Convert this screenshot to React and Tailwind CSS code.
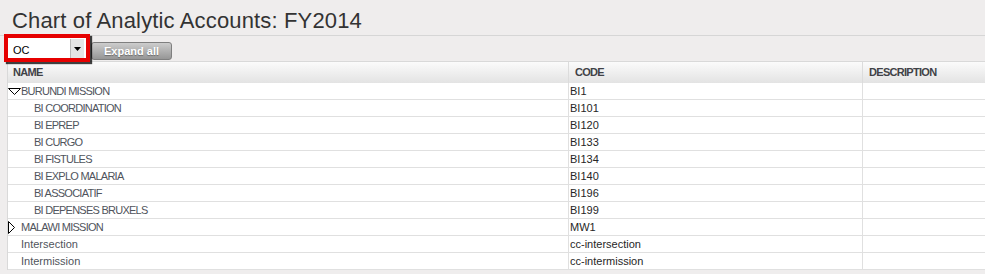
const ROWS = [
  { name: "BURUNDI MISSION", code: "BI1", kind: "open" },
  { name: "BI COORDINATION", code: "BI101", kind: "child" },
  { name: "BI EPREP", code: "BI120", kind: "child" },
  { name: "BI CURGO", code: "BI133", kind: "child" },
  { name: "BI FISTULES", code: "BI134", kind: "child" },
  { name: "BI EXPLO MALARIA", code: "BI140", kind: "child" },
  { name: "BI ASSOCIATIF", code: "BI196", kind: "child" },
  { name: "BI DEPENSES BRUXELS", code: "BI199", kind: "child" },
  { name: "MALAWI MISSION", code: "MW1", kind: "closed" },
  { name: "Intersection", code: "cc-intersection", kind: "leaf" },
  { name: "Intermission", code: "cc-intermission", kind: "leaf" },
];

function Toggle({ open }) {
  return (
    <span className="w-[13px] h-[16px] flex items-center shrink-0">
      {open ? (
        <svg width="13" height="7" viewBox="0 0 13 7">
          <polygon points="0.5,0.5 12.5,0.5 6.5,6.5" fill="none" stroke="#000" strokeWidth="1" />
        </svg>
      ) : (
        <svg width="7" height="13" viewBox="0 0 7 13">
          <polygon points="0.5,0.5 6.5,6.5 0.5,12.5" fill="none" stroke="#000" strokeWidth="1" />
        </svg>
      )}
    </span>
  );
}

function NameCell({ row }) {
  if (row.kind === "open" || row.kind === "closed") {
    return (
      <div className="flex items-center h-[16px] tracking-[-0.75px]">
        <Toggle open={row.kind === "open"} />
        <span>{row.name}</span>
      </div>
    );
  }
  if (row.kind === "child") {
    return <div className="h-[16px] pl-[26px] tracking-[-0.75px]">{row.name}</div>;
  }
  return <div className="h-[16px] pl-[13px]">{row.name}</div>;
}

export default function App() {
  return (
    <div className="w-full min-h-[274px] bg-[#efeded] font-['Liberation_Sans',Arial,sans-serif] overflow-hidden">
      {/* TITLE */}
      <h1 className="pl-3 pt-2 pb-[1px] text-[22px] leading-[26px] tracking-[0.15px] text-[#333] border-b border-[#d6d6d6]">
        Chart of Analytic Accounts: FY2014
      </h1>

      {/* TOOLBAR */}
      <div className="flex items-start h-[25px] pl-2">
        <div className="relative mt-[2px] w-[78px] h-[20px] bg-white flex">
          <span className="flex-1 pl-[5px] pt-[6px] text-[11px] leading-[12px] text-black">OC</span>
          <span className="mt-[1px] mr-[2px] w-[14px] h-[20px] bg-[#e4e4e4] border-l border-[#b9b9b9] border-b border-b-black flex items-center justify-center">
            <svg width="7" height="4" viewBox="0 0 7 4">
              <polygon points="0,0 7,0 3.5,4" fill="#000" />
            </svg>
          </span>
          {/* highlight */}
          <div className="absolute -inset-[4px] border-4 border-[#e60000] shadow-[2px_2px_1px_rgba(0,0,0,0.75)] pointer-events-none" />
        </div>
        <button className="ml-[5px] mt-[6px] w-[81px] h-[18px] rounded-[3px] border border-[#7f7f7f] bg-gradient-to-b from-[#cdcdcd] to-[#969696] text-white text-[11px] font-bold leading-[16px] [text-shadow:0_1px_1px_rgba(0,0,0,0.35)]">
          Expand all
        </button>
      </div>

      {/* TABLE */}
      <div className="ml-[7px] border-l border-t border-[#d9d9d9] bg-white text-[11px]">
        <div className="grid grid-cols-[561px_294px_1fr] h-[21px] bg-gradient-to-b from-[#fbfbfb] to-[#e3e3e3] font-bold text-[#3f4247] leading-[20px] tracking-[-0.7px]">
          <div className="pl-[5px] border-r border-[#dcdcdc]">NAME</div>
          <div className="pl-[6px] border-r border-[#dcdcdc]">CODE</div>
          <div className="pl-[6px]">DESCRIPTION</div>
        </div>
        {ROWS.map((row) => (
          <div
            key={row.code}
            className="grid grid-cols-[561px_294px_1fr] h-[17px] border-b border-[#e0e0e0] leading-[16px]"
          >
            <div className="border-r border-[#e0e0e0] text-[#50545c]">
              <NameCell row={row} />
            </div>
            <div className="pl-[1px] border-r border-[#e0e0e0] text-[#262626]">{row.code}</div>
            <div />
          </div>
        ))}
      </div>
    </div>
  );
}
